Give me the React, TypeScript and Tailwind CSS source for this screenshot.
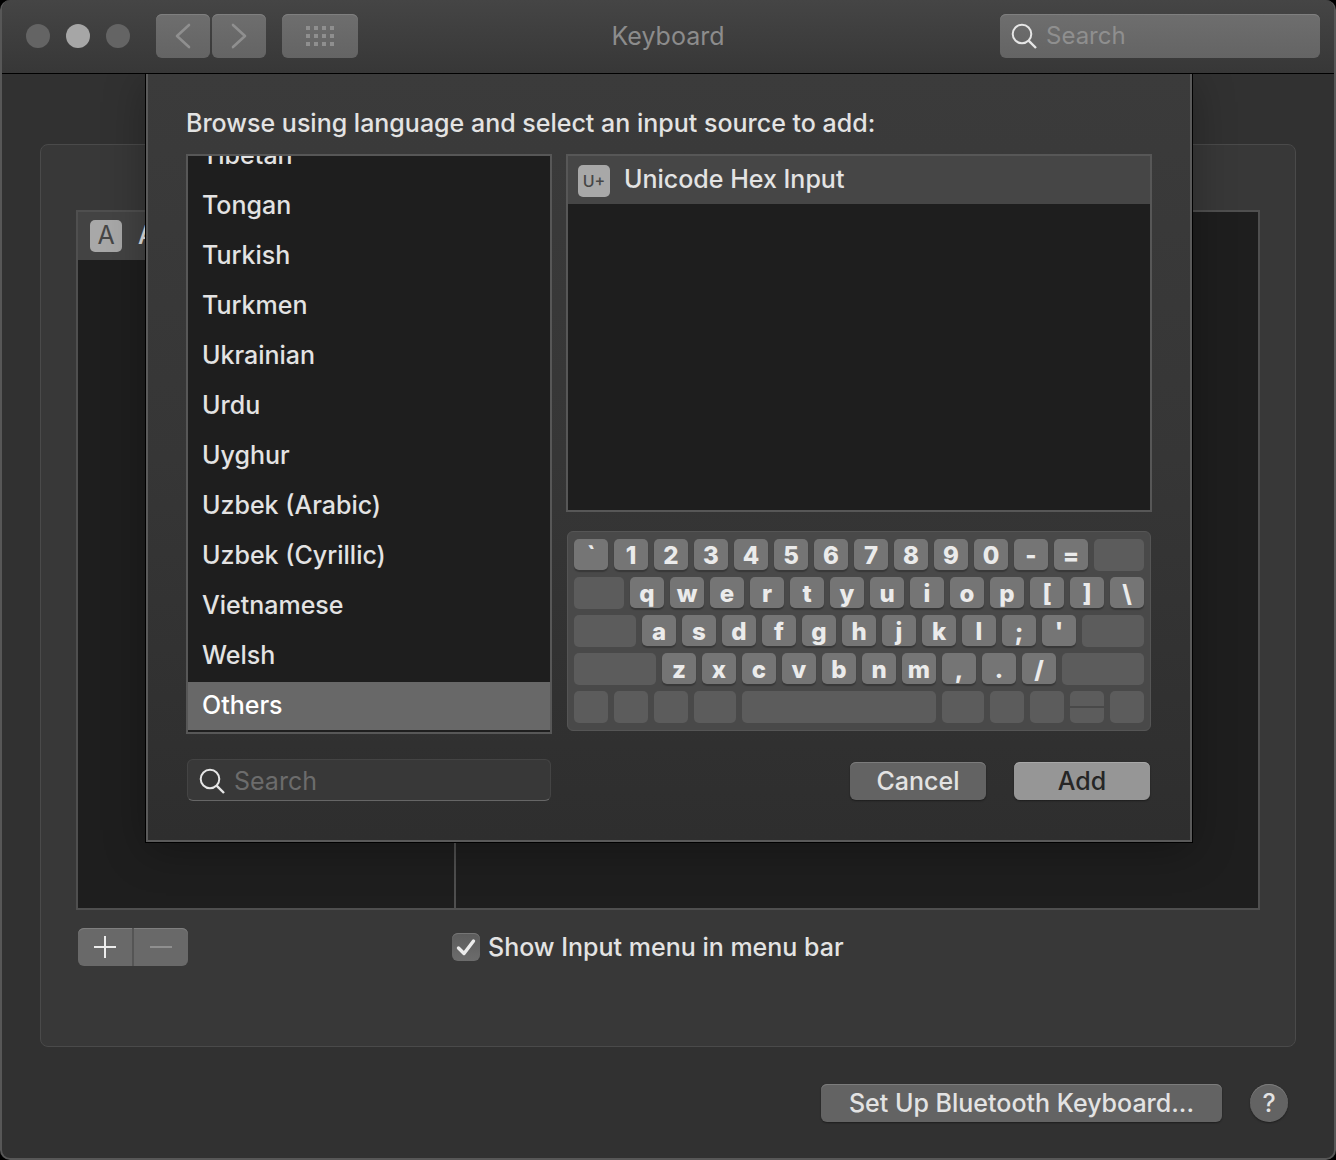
import { useState } from "react";

type Key = { w: number; label?: string; split?: boolean };

const letters = (chars: string): Key[] => chars.split("").map((label) => ({ w: 34, label }));
const blank = (w: number): Key => ({ w });

const keyRows: Key[][] = [
  [...letters("`1234567890-="), blank(50)],
  [blank(50), ...letters("qwertyuiop[]\\")],
  [blank(62), ...letters("asdfghjkl;'"), blank(62)],
  [blank(82), ...letters("zxcvbnm,./"), blank(82)],
  [
    blank(34), blank(34), blank(34), blank(42), blank(194), blank(42),
    blank(34), blank(34), { w: 34, split: true }, blank(34),
  ],
];

const languages = [
  "Tibetan", "Tongan", "Turkish", "Turkmen", "Ukrainian", "Urdu", "Uyghur",
  "Uzbek (Arabic)", "Uzbek (Cyrillic)", "Vietnamese", "Welsh", "Others",
];

const pushButton =
  "h-[38px] rounded-md bg-[#636363] text-[25px] leading-8 font-medium shadow-[inset_0_1px_0_#7c7c7c,0_1px_2px_rgba(0,0,0,0.4)]";
const toolbarButton =
  "flex h-11 items-center justify-center rounded-md bg-linear-to-b from-[#6e6e6e] to-[#646464] shadow-[inset_0_1px_0_#7f7f7f]";

function SearchIcon() {
  return (
    <svg className="size-7 shrink-0" viewBox="0 0 28 28" fill="none" stroke="#e6e6e6" strokeWidth="2" aria-hidden="true">
      <circle cx="12" cy="12" r="9.3" />
      <path d="M18.6 18.6 26 26" strokeWidth="2.4" />
    </svg>
  );
}

function KeyCap({ item }: { item: Key }) {
  if (item.label) {
    return (
      <div
        style={{ flexGrow: item.w }}
        className="mb-px flex min-w-0 basis-0 items-center justify-center rounded-[5px] bg-[#757575] pt-0.5 text-2xl leading-none font-extrabold text-[#ebebeb] shadow-[0_2px_1px_#383838]"
      >
        {item.label}
      </div>
    );
  }
  if (item.split) {
    return (
      <div style={{ flexGrow: item.w }} className="flex min-w-0 basis-0 flex-col gap-0.5">
        <div className="flex-1 rounded-t-[5px] bg-[#5c5c5c]" />
        <div className="flex-1 rounded-b-[5px] bg-[#5c5c5c]" />
      </div>
    );
  }
  return <div style={{ flexGrow: item.w }} className="min-w-0 basis-0 rounded-[5px] bg-[#5c5c5c]" />;
}

function Titlebar() {
  return (
    <header className="relative z-10 grid h-[74px] grid-cols-[1fr_auto_1fr] items-center border-b border-black bg-linear-to-b from-[#454545] to-[#373737] px-3.5 pb-px">
      <div className="flex items-center pl-2.5">
        <div className="flex gap-4">
          <button aria-label="Close" className="size-6 rounded-full bg-[#646464]" />
          <button aria-label="Minimize" className="size-6 rounded-full bg-[#a6a6a6]" />
          <button aria-label="Zoom" className="size-6 rounded-full bg-[#646464]" />
        </div>
        <div className="ml-6.5 flex gap-0.5">
          <button aria-label="Back" className={`${toolbarButton} w-[54px]`}>
            <svg className="h-7 w-4" viewBox="0 0 16 28" fill="none" stroke="#8f8f8f" strokeWidth="2.6" strokeLinecap="round" strokeLinejoin="round" aria-hidden="true">
              <path d="M14 3 2 14l12 11" />
            </svg>
          </button>
          <button aria-label="Forward" className={`${toolbarButton} w-[54px]`}>
            <svg className="h-7 w-4" viewBox="0 0 16 28" fill="none" stroke="#8f8f8f" strokeWidth="2.6" strokeLinecap="round" strokeLinejoin="round" aria-hidden="true">
              <path d="M2 3 14 14 2 25" />
            </svg>
          </button>
        </div>
        <button aria-label="Show All" className={`${toolbarButton} ml-4 w-[76px]`}>
          <svg className="h-5 w-7" viewBox="0 0 28 20" fill="#8f8f8f" aria-hidden="true">
            {[0, 8, 16].map((y) =>
              [0, 8, 16, 24].map((x) => <rect key={`${x}-${y}`} x={x} y={y} width="4" height="4" />),
            )}
          </svg>
        </button>
      </div>
      <h1 className="text-[25px] leading-8 text-[#8c8c8c]">Keyboard</h1>
      <label className="flex h-11 w-80 items-center gap-2 justify-self-end rounded-md bg-linear-to-b from-[#6e6e6e] to-[#646464] pr-3 pl-2.5 shadow-[inset_0_1px_0_#7f7f7f]">
        <SearchIcon />
        <input aria-label="Search preferences" placeholder="Search" className="w-full min-w-0 bg-transparent text-2xl leading-8 text-[#e6e6e6] outline-none placeholder:text-[#8f8f8f]" />
      </label>
    </header>
  );
}

function AddSourceSheet() {
  const [selected, setSelected] = useState("Others");
  return (
    <div className="absolute inset-x-0 top-[74px] pr-[142px] pl-36">
      <div
        role="dialog"
        aria-label="Add input source"
        className="border-2 border-t-0 border-[#5a5a5a] bg-linear-to-b from-[#3b3b3b] via-[#363636] via-50% to-[#2e2e2e] px-[38px] pt-[33px] pb-[39px] shadow-[0_0_0_1px_#000,0_8px_40px_rgba(0,0,0,0.3)]"
      >
        <p className="text-[25px] leading-8 font-medium">Browse using language and select an input source to add:</p>
        <div className="mt-[15px] flex gap-3.5">
          <div className="w-[366px] shrink-0">
            <ul className="flex h-[580px] flex-col justify-end gap-0.5 overflow-hidden border-2 border-[#575757] bg-[#1e1e1e] pb-0.5">
              {languages.map((name) => (
                <li key={name} className="shrink-0">
                  <button
                    onClick={() => setSelected(name)}
                    aria-pressed={name === selected}
                    className={
                      name === selected
                        ? "block h-12 w-full bg-[#686868] px-3.5 text-left text-[25px] font-medium text-white"
                        : "block h-12 w-full px-3.5 text-left text-[25px] font-medium"
                    }
                  >
                    {name}
                  </button>
                </li>
              ))}
            </ul>
          </div>
          <div className="flex min-w-0 flex-1 flex-col">
            <ul className="h-[358px] border-2 border-[#575757] bg-[#1e1e1e]">
              <li>
                <button className="flex h-12 w-full items-center gap-3.5 bg-[#464646] px-2.5 text-left text-[25px] font-medium">
                  <span className="mt-0.5 flex size-8 shrink-0 items-center justify-center rounded-[5px] bg-[#a8a8a8] text-base font-medium text-[#464646]">U+</span>
                  <span>Unicode Hex Input</span>
                </button>
              </li>
            </ul>
            <div className="mx-px mt-[19px] flex h-[200px] flex-col gap-1.5 rounded-md border border-[#555] bg-[#494949] px-1.5 py-[7px]">
              {keyRows.map((row, r) => (
                <div key={r} className="flex flex-1 gap-1.5">
                  {row.map((item, i) => (
                    <KeyCap key={i} item={item} />
                  ))}
                </div>
              ))}
            </div>
          </div>
        </div>
        <div className="mt-[25px] flex items-center justify-between pr-0.5 pl-px">
          <label className="flex h-[42px] w-[364px] items-center gap-2 rounded-md border border-[#444] border-b-[#666] bg-[#383838] pt-0.5 pr-3 pl-2.5">
            <SearchIcon />
            <input aria-label="Search languages" placeholder="Search" className="w-full min-w-0 bg-transparent text-[25px] leading-8 text-[#e6e6e6] outline-none placeholder:text-[#6c6c6c]" />
          </label>
          <div className="flex gap-7 pt-0.5">
            <button className={`${pushButton} w-[136px]`}>Cancel</button>
            <button className="h-[38px] w-[136px] rounded-md bg-[#969696] text-[25px] leading-8 font-medium text-[#262626] shadow-[inset_0_1px_0_#a8a8a8,0_1px_2px_rgba(0,0,0,0.4)]">Add</button>
          </div>
        </div>
      </div>
    </div>
  );
}

export default function App() {
  const [showMenu, setShowMenu] = useState(true);
  return (
    <div className="bg-black font-[Inter,'Liberation_Sans',sans-serif] text-[#e3e3e3]">
      <div className="relative flex min-h-screen flex-col overflow-hidden rounded-[10px] border-2 border-t-0 border-[#575757] bg-[#313131]">
        <Titlebar />
        <main className="flex flex-1 flex-col px-[38px] pt-[70px] pb-9">
          <section className="flex flex-1 flex-col rounded-lg border border-[#4a4a4a] bg-[#383838] px-[35px] pt-[65px] pb-20">
            <div className="flex flex-1 border-2 border-[#4f4f4f] bg-[#1e1e1e]">
              <div className="w-[378px] shrink-0 border-r-2 border-[#4f4f4f]">
                <div className="flex h-12 items-center gap-4 bg-[#434343] px-3 text-[25px] font-medium">
                  <span className="flex size-8 shrink-0 items-center justify-center rounded-[5px] bg-[#a8a8a8] font-normal text-[#464646]">A</span>
                  <span>ABC</span>
                </div>
              </div>
              <div className="flex-1" />
            </div>
            <div className="mt-[18px] grid grid-cols-[374px_1fr] items-center px-0.5">
              <div className="flex">
                <button aria-label="Add" className="flex h-[38px] w-14 items-center justify-center rounded-l-md border-r-2 border-[#555] bg-[#696969] shadow-[inset_0_1px_0_#7f7f7f]">
                  <svg className="size-6" viewBox="0 0 24 24" stroke="#ececec" strokeWidth="2" aria-hidden="true">
                    <path d="M1 12h22M12 1v22" />
                  </svg>
                </button>
                <button aria-label="Remove" className="flex h-[38px] w-[54px] items-center justify-center rounded-r-md bg-[#696969] shadow-[inset_0_1px_0_#7f7f7f]">
                  <svg className="size-6" viewBox="0 0 24 24" stroke="#8f8f8f" strokeWidth="2" aria-hidden="true">
                    <path d="M1 12h22" />
                  </svg>
                </button>
              </div>
              <label className="flex items-center gap-2 text-[25px] leading-8 font-medium">
                <span className="grid size-7 shrink-0">
                  <input
                    type="checkbox"
                    checked={showMenu}
                    onChange={(e) => setShowMenu(e.target.checked)}
                    className="peer col-start-1 row-start-1 size-7 appearance-none rounded-md bg-linear-to-b from-[#5c5c5c] to-[#6c6c6c] shadow-[inset_0_1px_0_#757575]"
                  />
                  <svg className="pointer-events-none invisible col-start-1 row-start-1 size-7 peer-checked:visible" viewBox="0 0 28 28" fill="none" stroke="#ececec" strokeWidth="3.4" strokeLinecap="round" strokeLinejoin="round" aria-hidden="true">
                    <path d="m6.5 15 5.5 5.5L21.5 8" />
                  </svg>
                </span>
                Show Input menu in menu bar
              </label>
            </div>
          </section>
          <div className="mt-[37px] flex justify-end gap-7 pr-2">
            <button className={`${pushButton} px-7`}>Set Up Bluetooth Keyboard...</button>
            <button aria-label="Help" className="size-[38px] rounded-full bg-[#636363] text-[25px] leading-8 font-medium shadow-[inset_0_1px_0_#7c7c7c,0_1px_2px_rgba(0,0,0,0.4)]">?</button>
          </div>
        </main>
        <AddSourceSheet />
      </div>
    </div>
  );
}
